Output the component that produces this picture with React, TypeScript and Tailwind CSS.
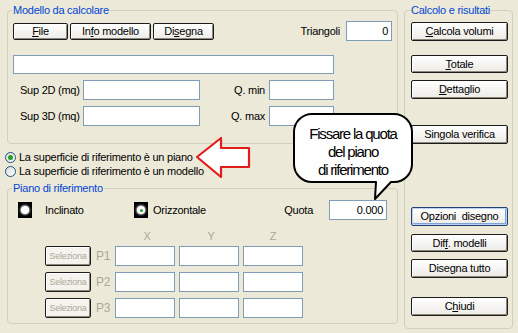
import { ReactNode } from "react";

function XpButton({
  children,
  className = "",
  focused = false,
}: {
  children: ReactNode;
  className?: string;
  focused?: boolean;
}) {
  return (
    <button
      type="button"
      className={`flex shrink-0 items-center justify-center overflow-hidden rounded-[2px] border bg-gradient-to-b from-[#ffffff] to-[#ecebe6] leading-none text-black ${
        focused
          ? "border-[#24427a] shadow-[inset_0_0_0_1px_#b9d1f5,inset_-1px_-1px_0_1px_#7ea2d8]"
          : "border-[#1c1c1c] shadow-[inset_1px_1px_0_#fff,inset_-1px_-1px_0_#8c897c]"
      } ${className}`}
    >
      {children}
    </button>
  );
}

function Field({ className = "", value = "" }: { className?: string; value?: string }) {
  return (
    <div
      className={`flex shrink-0 items-center justify-end border border-[#7f9db9] bg-white pr-[3px] text-[11px] text-black ${className}`}
    >
      {value}
    </div>
  );
}

function XpRadio({ checked }: { checked?: boolean }) {
  return (
    <span className="flex h-[11px] w-[11px] items-center justify-center rounded-full border border-[#1c5180] bg-gradient-to-br from-[#dcdcd5] to-white">
      {checked && <span className="h-[5px] w-[5px] rounded-full bg-[#21a121]" />}
    </span>
  );
}

function BlackRadio({ checked }: { checked?: boolean }) {
  return (
    <span className="flex h-[16px] w-[14px] shrink-0 items-center justify-center bg-black">
      <span className="flex h-[8px] w-[8px] items-center justify-center rounded-full bg-white shadow-[0_0_2px_1px_rgba(255,255,255,0.7)]">
        {checked && <span className="h-[3px] w-[3px] rounded-full bg-[#2aa52a]" />}
      </span>
    </span>
  );
}

const points = ["P1", "P2", "P3"];

export default function App() {
  return (
    <div className="relative flex h-[333px] w-[518px] gap-[6px] overflow-hidden bg-[#ece9d8] pl-[7px] pt-[3px] font-['Liberation_Sans',Arial,sans-serif] text-[11px] tracking-[-0.25px] text-black">
      <div className="flex w-[391px] shrink-0 flex-col">
        <fieldset className="h-[141px] rounded-[4px] border border-[#d0d0bf] px-[5px]">
          <legend className="ml-[-1px] px-[1px] leading-[14px] text-[#0046d5]">Modello da calcolare</legend>
          <div className="mt-[4px] flex h-[20px] items-center">
            <XpButton className="h-[17px] w-[55px]">
              <span className="text-[11px]"><span className="underline">F</span>ile</span>
            </XpButton>
            <XpButton className="ml-[2px] h-[17px] w-[81px]">
              <span className="text-[11px]">In<span className="underline">f</span>o modello</span>
            </XpButton>
            <XpButton className="ml-[2px] h-[17px] w-[61px]">
              <span className="text-[11px]">Di<span className="underline">s</span>egna</span>
            </XpButton>
            <span className="ml-auto mr-[6px]">Triangoli</span>
            <Field className="h-[20px] w-[46px]" value="0" />
          </div>
          <Field className="mt-[14px] h-[19px] w-[321px]" />
          {["Sup 2D (mq)|Q. min", "Sup 3D (mq)|Q. max"].map((row) => {
            const [a, b] = row.split("|");
            return (
              <div key={a} className="mt-[6px] flex h-[20px] items-center">
                <span className="w-[70px] pl-[7px]">{a}</span>
                <Field className="h-[20px] w-[117px]" />
                <span className="w-[69px] pr-[4px] text-right">{b}</span>
                <Field className="h-[20px] w-[65px]" />
              </div>
            );
          })}
        </fieldset>

        <div className="mt-[6px] flex flex-col">
          <label className="ml-[-2px] flex h-[14px] items-center gap-[3px]">
            <XpRadio checked />
            La superficie di riferimento è un piano
          </label>
          <label className="ml-[-2px] flex h-[14px] items-center gap-[3px]">
            <XpRadio />
            La superficie di riferimento è un modello
          </label>
        </div>

        <fieldset className="mt-[3px] h-[143px] rounded-[4px] border border-[#d0d0bf] px-[5px]">
          <legend className="ml-[-1px] px-[1px] leading-[14px] text-[#0046d5]">Piano di riferimento</legend>
          <div className="mt-[5px] flex h-[20px] items-center">
            <div className="flex w-[121px] items-center pl-[5px]">
              <BlackRadio />
              <span className="ml-[13px]">Inclinato</span>
            </div>
            <BlackRadio checked />
            <span className="ml-[5px]">Orizzontale</span>
            <span className="ml-auto mr-[16px]">Quota</span>
            <Field className="mr-[5px] h-[20px] w-[58px]" value="0.000" />
          </div>
          <div className="mt-[9px] flex h-[14px] items-center pl-[102px] text-[#aca899]">
            <span className="w-[64px] text-center">X</span>
            <span className="w-[64px] text-center">Y</span>
            <span className="w-[60px] text-center">Z</span>
          </div>
          <div className="mt-[3px] flex flex-col gap-[6px]">
            {points.map((p) => (
              <div key={p} className="flex h-[20px] items-center">
                <XpButton className="ml-[32px] h-[20px] w-[46px] bg-none bg-[#f4f3ee]">
                  <span className="text-[9px] tracking-[-0.3px] text-[#aca899]">Seleziona</span>
                </XpButton>
                <span className="ml-[5px] w-[19px] text-[12px] text-[#aca899]">{p}</span>
                <Field className="h-[20px] w-[60px]" />
                <Field className="ml-[4px] h-[20px] w-[60px]" />
                <Field className="ml-[4px] h-[20px] w-[60px]" />
              </div>
            ))}
          </div>
        </fieldset>
      </div>

      <fieldset className="flex h-[326px] w-[109px] shrink-0 flex-col rounded-[4px] border border-[#d0d0bf] pl-[6px] text-[11px]">
        <legend className="px-0 leading-[14px] text-[#0046d5]">Calcolo e risultati</legend>
        <XpButton className="mt-[5px] h-[19px] w-[97px]">
          <span><span className="underline">C</span>alcola volumi</span>
        </XpButton>
        <XpButton className="mt-[14px] h-[18px] w-[97px]">
          <span><span className="underline">T</span>otale</span>
        </XpButton>
        <XpButton className="mt-[7px] h-[19px] w-[97px]">
          <span><span className="underline">D</span>ettaglio</span>
        </XpButton>
        <XpButton className="mt-[26px] h-[19px] w-[97px]">
          <span>Singola verifica</span>
        </XpButton>
        <XpButton focused className="mt-[63px] h-[19px] w-[97px]">
          <span>Opzioni&nbsp; disegno</span>
        </XpButton>
        <XpButton className="mt-[8px] h-[18px] w-[97px]">
          <span>Dif<span className="underline">f</span>. modelli</span>
        </XpButton>
        <XpButton className="mt-[7px] h-[19px] w-[97px]">
          <span>Disegna tutto</span>
        </XpButton>
        <XpButton className="mt-[19px] h-[19px] w-[97px]">
          <span>C<span className="underline">h</span>iudi</span>
        </XpButton>
      </fieldset>

      {/* red arrow pointing at the selected option */}
      <svg className="absolute left-[190px] top-[132px]" width="66" height="52" viewBox="0 0 66 52">
        <path
          d="M7 25 L31 6 L31 16 L59 16 L59 35 L31 35 L31 45 Z"
          fill="white"
          stroke="#e21b1b"
          strokeWidth="2.2"
          strokeLinejoin="round"
        />
      </svg>

      {/* callout bubble */}
      <svg className="absolute left-[290px] top-[110px]" width="126" height="94" viewBox="0 0 126 94">
        <path
          d="M22 4 H104 A18 18 0 0 1 122 22 V54 A18 18 0 0 1 104 72 H101 L85 89 L86 72 H22 A18 18 0 0 1 4 54 V22 A18 18 0 0 1 22 4 Z"
          fill="white"
          stroke="black"
          strokeWidth="2"
          strokeLinejoin="round"
        />
      </svg>
      <div className="absolute left-[294px] top-[125px] flex w-[118px] flex-col items-center text-[15px] leading-[18px] tracking-[-1.2px] text-black">
        <span>Fissare la quota</span>
        <span>del piano</span>
        <span>di riferimento</span>
      </div>
    </div>
  );
}
